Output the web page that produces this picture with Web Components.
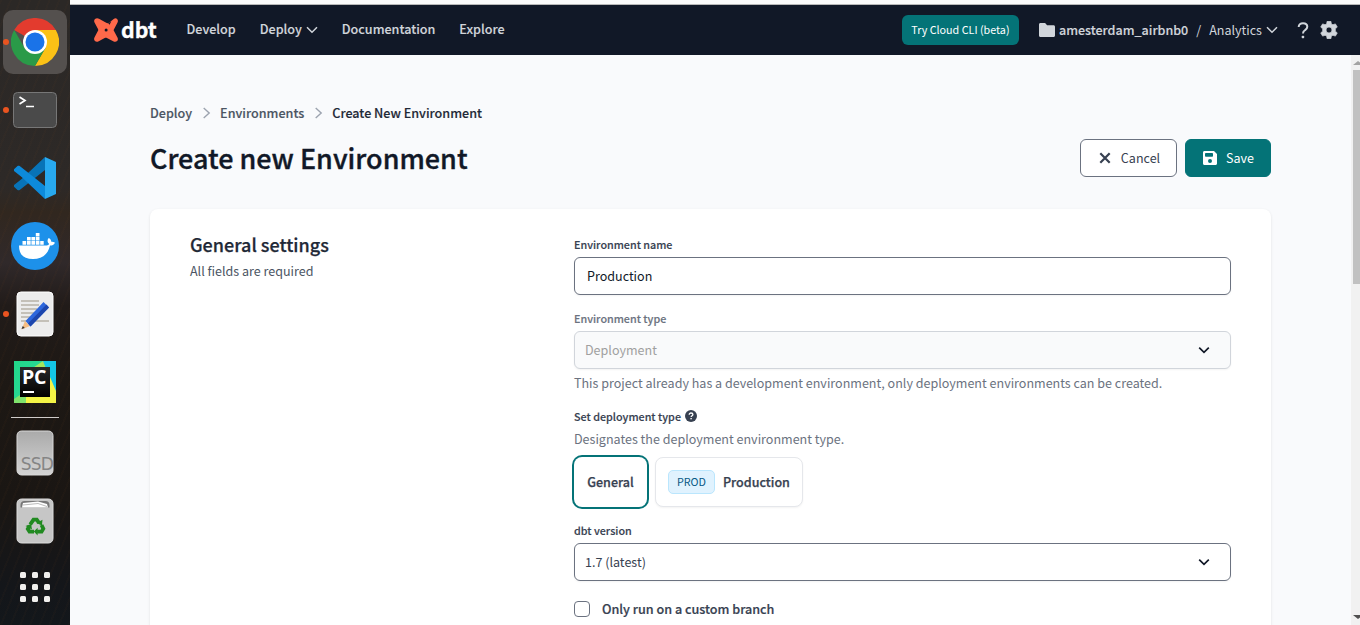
<!DOCTYPE html>
<html lang="en">
<head>
<meta charset="utf-8">
<title>Create New Environment</title>
<style>
html,body{margin:0;height:100%;overflow:hidden}
body{font-family:"Noto Sans CJK SC","Noto Sans",sans-serif;font-size:12.54px;color:#1f2937;line-height:20px}
</style>
</head>
<body>
<env-app></env-app>
<script>
const define=(name,html)=>customElements.define(name,class extends HTMLElement{
  constructor(){super();this.attachShadow({mode:'open'}).innerHTML=html;}
});

const ICONS={
  down:['0 0 12 12','<path d="M1 3.3 6 8.300 11 3.300" fill="none" stroke="currentColor" stroke-width="1.5"/>'],
  select:['0 0 12 12','<path d="M1.2 3.6 6 8.3 10.8 3.6" fill="none" stroke="currentColor" stroke-width="1.7"/>'],
  right:['0 0 12 12','<path d="M3.7 1 9.2 6 3.7 11" fill="none" stroke="currentColor" stroke-width="1.4"/>'],
  folder:['0 0 16 14','<path d="M1.5 0h4.6l2 2.2h6.4c.9 0 1.5.6 1.5 1.5v8.8c0 .9-.6 1.5-1.5 1.5h-13C.6 14 0 13.4 0 12.500V1.500C0 .6.6 0 1.500 0z" fill="currentColor"/>'],
  help:['0 0 12 17','<path d="M1.700 5C1.700 2.600 3.400 1.200 6 1.200s4.300 1.400 4.300 3.500c0 1.900-1.200 2.700-2.400 3.600C6.600 9.200 6 9.800 6 11.500" fill="none" stroke="currentColor" stroke-width="2"/><rect x="4.700" y="13.700" width="2.500" height="2.500" rx=".8" fill="currentColor"/>'],
  gear:['2 2 20 20','<path fill="currentColor" fill-rule="evenodd" d="M9.900 2.300h4.200l.5 2.900 1.800 1 2.700-1 2.100 3.600-2.200 1.900v2.600l2.200 1.900-2.100 3.600-2.700-1-1.800 1-.5 2.900H9.900l-.5-2.900-1.800-1-2.700 1-2.100-3.600L5 13.300v-2.600L2.800 8.800l2.100-3.600 2.700 1 1.800-1zM12 8.700a3.300 3.300 0 1 0 0 6.600 3.300 3.300 0 0 0 0-6.600z" stroke="currentColor" stroke-width=".8" stroke-linejoin="round"/>'],
  close:['0 0 12 12','<path d="M1.300 1.300l9.400 9.400M10.700 1.300l-9.400 9.400" stroke="currentColor" stroke-width="2.200"/>'],
  save:['0 0 14 14','<path fill="currentColor" fill-rule="evenodd" d="M1.500 0H11l3 3v9.500c0 .9-.6 1.500-1.500 1.500h-11C.6 14 0 13.400 0 12.500v-11C0 .6.600 0 1.500 0zM2.800 2c-.4 0-.8.3-.8.700v2.200c0 .5.300.8.800.8h6.400c.5 0 .8-.3.800-.8V2.700c0-.4-.3-.7-.8-.7zM7 8a2 2 0 1 0 0 4 2 2 0 0 0 0-4z"/>'],
  info:['0 0 12 12','<circle cx="6" cy="6" r="6" fill="currentColor"/><path d="M4.200 4.700C4.200 3.600 5 3 6 3s1.900.6 1.900 1.500C7.900 5.700 6.100 5.700 6.100 7.100" fill="none" stroke="#fff" stroke-width="1.300"/><rect x="5.400" y="8" width="1.400" height="1.300" fill="#fff"/>'],
  dbt:['0 0 24 24','<path d="M1 1.100C2.200-.1 3.700 0 5 .7l7.200 4.100c1 .6 2 .5 2.900-.1L19.700 1c1.200-.9 2.500-.9 3.400.1 1.100 1.200 1 2.500.2 3.900l-3.300 6.200c-.4.700-.4 1.200 0 1.900l3.200 6c.9 1.400 1 2.800-.1 3.900-1.100 1.100-2.600 1-3.900.2l-6.300-3.200c-.8-.5-1.400-.5-2.200 0L4.700 23.200c-1.300.8-2.700.9-3.800-.2-1.100-1.200-1-2.500-.2-3.900l3.300-6.300c.3-.6.300-1.100 0-1.700L.8 5C-.1 3.600-.1 2.200 1 1.100z" fill="#ff694a"/><path d="M14.200 5.200 17.300 3.300l-1.700 3.500z" fill="#111827"/><circle cx="12.100" cy="12" r="1.500" fill="#111827"/>'],
  chrome:['0 0 48 48','<path d="M24 24 3.200 12A24 24 0 0 1 44.800 12z" fill="#e33b2e"/><path d="M24 12H44.800A24 24 0 0 1 24 48L34.400 30z" fill="#fbc116"/><path d="M13.600 30 3.200 12A24 24 0 0 0 24 48l10.400-18z" fill="#2a9a48"/><circle cx="24" cy="24" r="12" fill="#fff"/><circle cx="24" cy="24" r="9.500" fill="#1a73e8"/>'],
  terminal:['0 0 44 36','<rect x=".5" y=".5" width="43" height="35" rx="4" fill="#4a4a4a" stroke="#777" stroke-width="1"/><path d="M6.500 5 12 8.500 6.500 12" fill="none" stroke="#fff" stroke-width="1.700"/><path d="M13 14.500h8" stroke="#fff" stroke-width="1.500"/>'],
  code:['0 0 42 42','<path d="M31 0 7.600 22 4.500 24.500 0 28v1.800l3.500 3.200c.8.500 1.500.4 2.200 0L31 13z" fill="#0873b7"/><path d="M31 42 7.600 20 4.500 17.500 0 14v-1.800L3.500 9c.8-.5 1.500-.4 2.200 0L31 29z" fill="#0d8ada"/><path d="M31 0 42 5v32l-11 5z" fill="#28a9ef"/>'],
  docker:['0 0 48 48','<circle cx="24" cy="24" r="24" fill="#1d91ea"/><g fill="#fff"><path d="M8 23.500h27.500c1.800 0 2.600-1 2.400-2-1.900-1.800-1.600-4-.2-5.500 2 1.100 2.500 2.400 2.600 3.800 1.300-.2 2.700.2 3.700 1-1 2-2.700 2.800-5 2.800C37 32.500 31 37 22 37 13 37 8 33 8 23.500z"/><path d="M11.500 19h3.700v3.700h-3.700zM16 19h3.700v3.700H16zM20.400 19h3.700v3.700h-3.700zM24.800 19h3.700v3.700h-3.700zM29.200 19h3.500v3.700h-3.500zM16 15h3.700v3.500H16zM20.400 15h3.700v3.500h-3.700zM24.800 15h3.700v3.500h-3.700zM24.800 11h3.700v3.500h-3.700z"/></g>'],
  editor:['0 0 38 46','<rect x="1" y="1" width="36" height="44" rx="4" fill="#ececec" stroke="#fff"/><path d="M5 10h18M5 14h18M5 18h16M5 22h13M5 26h9M5 30h28" stroke="#c4c0b8" stroke-width="2"/><path d="M5.500 38.500 9 30l5 5z" fill="#f6bd82"/><path d="m5.500 38 1.300-3 2 2z" fill="#333"/><path d="M9.500 30 27.500 11l5.500 5.500L14.500 35.500z" fill="#2e67dc"/><path d="m12 32.500 18.500-19 2.500 3L14.500 35.500z" fill="#1d46ad"/>'],
  pycharm:['0 0 42 42','<defs><linearGradient id="p" x2="1" y2=".6"><stop stop-color="#21d789"/><stop offset="1" stop-color="#2fd9a0"/></linearGradient></defs><path d="M0 0h42v42H0z" fill="url(#p)"/><path d="M28 0h14v32z" fill="#14c6e6"/><path d="M10 13 29 0l4 10-10 12z" fill="#a5e45e"/><path d="M33 9 42 30v12H0l26-14z" fill="#f3f446"/><path d="M0 38l12-8v12H0z" fill="#7fe36c"/>'],
  disk:['0 0 38 46','<defs><linearGradient id="g" x2="0" y2="1"><stop stop-color="#aaa"/><stop offset="1" stop-color="#d3d3d3"/></linearGradient></defs><rect x="1" y="1" width="36" height="44" rx="4.500" fill="url(#g)" stroke="#d8d8d8"/>'],
  trash:['0 0 38 46','<rect x="1" y="1" width="36" height="44" rx="4.500" fill="#c6c6c6" stroke="#ddd"/><path d="M4.500 9.500V7c0-2.500 1.500-4 4-4h21c2.500 0 4 1.500 4 4v2.500z" fill="#777"/><path d="M6 9.500 7 5l15-1.500 9 2.500 1 3.500z" fill="#fff"/><path d="m7 7 15-1.500 9 3" fill="none" stroke="#bbb"/><g fill="none" stroke="#218a21" stroke-width="3.800"><path d="m14.200 26.500 3.300-4.900h3.300l2.300 3.400"/><path d="m25.500 27 1.800 3.700-1.700 2.900h-4.500"/><path d="M18 33.600h-4.500l-1.700-2.700 1.700-3"/></g><path d="m26.500 21.700-.6 5.800-5.500-2.400zM21.600 29.800v7.600l-3.800-3.800zM9.500 28l5.600-2 .9 5.500z" fill="#218a21"/>']
};
class UiIcon extends HTMLElement{
  connectedCallback(){
    if(this.shadowRoot)return;
    const [box,art]=ICONS[this.getAttribute('name')];
    this.attachShadow({mode:'open'}).innerHTML=`<style>:host{display:block;flex:none;width:var(--w,12px);height:var(--h,12px)}svg{display:block;width:100%;height:100%}</style><svg viewBox="${box}">${art}</svg>`;
  }
}
customElements.define('ui-icon',UiIcon);

define('dock-item',`<style>
:host{display:grid;place-items:center;position:relative;width:64px;height:64px;flex:none;margin-bottom:4px;border-radius:10px}
:host([active]){background:#54504e}
:host([running])::before{content:"";position:absolute;left:0;top:29px;width:6px;height:6px;border-radius:50%;background:#e95420}
</style><slot></slot>`);

define('app-dock',`<style>
:host{display:flex;flex-direction:column;align-items:center;box-sizing:border-box;width:70px;flex:none;padding-top:10px;
 background:repeating-linear-gradient(112deg,rgba(120,70,30,.05) 0 2px,transparent 2px 9px),linear-gradient(#2b2826 0,#2d2927 30%,#31271f 34%,#30292a 42%,#211b19 49%,#1d1814 62%,#1a1613 80%,#14161a 94%,#13171b)}
.pc{display:grid;place-items:center}.pc>*{grid-area:1/1}
.tile{z-index:1;box-sizing:border-box;width:30px;height:30px;background:linear-gradient(#292929,#000);color:#fff;font:700 19.5px/20px "Open Sans",sans-serif;letter-spacing:-.3px;padding-left:2px}
.tile i{display:block;width:11px;height:2px;margin:4px 0 0 1px;background:#fff}
hr{width:48px;height:1px;margin:-1px 0 3px;border:0;background:#d0ccca;flex:none}
.ssd{position:relative}.ssd span{position:absolute;right:1px;bottom:2px;font:17px/20px "DejaVu Sans",sans-serif;color:#858585;letter-spacing:-.8px}
.apps{display:grid;grid-template-columns:repeat(3,6px);gap:6px;margin-top:-4px}.apps b{width:6px;height:6px;border-radius:1.5px;background:#f1f0ee}
</style>
<dock-item active running><ui-icon name="chrome" style="--w:48px;--h:48px"></ui-icon></dock-item>
<dock-item running><ui-icon name="terminal" style="--w:44px;--h:36px"></ui-icon></dock-item>
<dock-item><ui-icon name="code" style="--w:42px;--h:42px"></ui-icon></dock-item>
<dock-item><ui-icon name="docker" style="--w:48px;--h:48px"></ui-icon></dock-item>
<dock-item running><ui-icon name="editor" style="--w:38px;--h:46px"></ui-icon></dock-item>
<dock-item><div class="pc"><ui-icon name="pycharm" style="--w:42px;--h:42px"></ui-icon><div class="tile">PC<i></i></div></div></dock-item>
<hr>
<dock-item><div class="ssd"><ui-icon name="disk" style="--w:38px;--h:46px"></ui-icon><span>SSD</span></div></dock-item>
<dock-item><ui-icon name="trash" style="--w:38px;--h:46px"></ui-icon></dock-item>
<dock-item><div class="apps"><b></b><b></b><b></b><b></b><b></b><b></b><b></b><b></b><b></b></div></dock-item>`);

define('nav-bar',`<style>
:host{display:flex;align-items:center;height:51px;flex:none;box-sizing:border-box;padding:0 22px 0 24px;background:#111827;color:#d1d5db;border-top:1px solid #b8b8b8;font-weight:500;white-space:nowrap}
.logo{display:flex;align-items:center;width:92.5px;color:#fff;font:700 21.3px/24px "Noto Sans CJK SC",sans-serif;-webkit-text-stroke:.3px #fff}
.logo span{margin:-2px 0 0 3px}
.link{display:flex;align-items:center;gap:4px;margin-right:24px;margin-top:-2px;font-size:12.58px}
.link ui-icon{margin-top:1px}
.link,.proj{-webkit-text-stroke:.15px currentColor}
.cta{box-sizing:border-box;width:117px;height:30px;border-radius:6px;background:#047377;color:#fff;display:grid;place-items:center;font-weight:400;font-size:10.75px;margin:0 20px 0 auto}
.proj{margin-left:4px}
.slash{margin:0 8px;font-weight:400}.an{font-weight:400;margin-right:4px}
</style>
<div class="logo"><ui-icon name="dbt" style="--w:24px;--h:24px"></ui-icon><span>dbt</span></div>
<span class="link">Develop</span><span class="link">Deploy <ui-icon name="down"></ui-icon></span><span class="link">Documentation</span><span class="link">Explore</span>
<div class="cta">Try Cloud CLI (beta)</div>
<ui-icon name="folder" style="--w:16px;--h:14px"></ui-icon><span class="proj">amesterdam_airbnb0</span><span class="slash">/</span><span class="an">Analytics</span><ui-icon name="down"></ui-icon>
<ui-icon name="help" style="--w:12px;--h:17px;margin-left:19px"></ui-icon><ui-icon name="gear" style="--w:18px;--h:18px;margin-left:11px"></ui-icon>`);

define('bread-crumb',`<style>
:host{display:flex;align-items:center;height:20px;gap:8px;font-size:12.58px;font-weight:500;color:#4b5563}
span,b{font-weight:500;-webkit-text-stroke:.15px currentColor}b{color:#1f2937}ui-icon{color:#9ca3af}
</style><span>Deploy</span><ui-icon name="right"></ui-icon><span>Environments</span><ui-icon name="right"></ui-icon><b>Create New Environment</b>`);

define('ui-button',`<style>
:host{display:flex;align-items:center;justify-content:center;gap:10px;box-sizing:border-box;height:38px;padding-left:2px;border:1px solid #6b7280;border-radius:6px;background:#fff;color:#374151}
:host([primary]){background:#047377;border-color:#047377;color:#fff;gap:9px;padding-left:1px}
</style><slot></slot>`);

define('form-label',`<style>:host{display:flex;align-items:center;gap:4px;height:16px;margin-bottom:4px;font-size:10.75px;line-height:16px;font-weight:500;color:#374151;white-space:nowrap;-webkit-text-stroke:.15px currentColor}:host([muted]){color:#6b7280}::slotted(ui-icon){color:#374151;margin-top:-2px}</style><slot></slot>`);
define('form-hint',`<style>:host{display:block;height:20px;line-height:20px;color:#6b7280;white-space:nowrap}</style><slot></slot>`);
define('form-box',`<style>:host{display:flex;align-items:center;justify-content:space-between;box-sizing:border-box;height:38px;padding:0 20px 0 10px;border:1px solid #6b7280;border-radius:6px;background:#fff;color:#374151;box-shadow:0 1px 2px rgba(0,0,0,.05)}
:host([text]){padding-left:12px;color:#111827}:host([disabled]){border-color:#d1d5db;background:#f9fafb;color:#a0a0a0}
::slotted(ui-icon){color:#111827}</style><slot></slot>`);
define('type-option',`<style>:host{display:flex;align-items:center;gap:8px;box-sizing:border-box;height:50px;padding:0 12px;border:1px solid #e5e7eb;border-radius:8px;background:#fff;font-weight:500;color:#374151;box-shadow:0 1px 2px rgba(0,0,0,.05)}
:host([selected]){border-color:transparent;box-shadow:0 0 0 2px #047377}
::slotted(span){-webkit-text-stroke:.25px currentColor}</style><slot></slot>`);
define('type-badge',`<style>:host{display:grid;place-items:center;flex:none;box-sizing:border-box;width:47px;height:24px;border:1px solid #bae6fd;border-radius:5px;background:#e0f2fe;color:#075985;font-size:10.75px;font-weight:400}</style><slot></slot>`);
define('check-row',`<style>:host{display:flex;align-items:center;gap:12px;height:16px;font-size:12.6px;font-weight:500;color:#374151;-webkit-text-stroke:.2px currentColor}i{box-sizing:border-box;width:16px;height:16px;border:1px solid #6b7280;border-radius:4px;background:#fff}</style><i></i><slot></slot>`);

define('settings-card',`<style>
:host{display:grid;grid-template-columns:384px 1fr;box-sizing:border-box;height:700px;padding:28px 40px;border-radius:8px;background:#fff;box-shadow:0 1px 3px rgba(0,0,0,.1)}
h2{margin:-5px 0 5px;font-size:18px;line-height:24px;font-weight:500;color:#1f2937;-webkit-text-stroke:.25px currentColor}p{margin:0;color:#4b5563}
form-box{margin-bottom:16px}.types{display:flex;gap:8px;margin:8px 0 16px}.types type-option[selected]{width:73px;justify-content:center;padding:0}.types .prod{width:148px}
</style>
<section><h2>General settings</h2><p>All fields are required</p></section>
<section>
<form-label>Environment name</form-label><form-box text><span>Production</span></form-box>
<form-label muted>Environment type</form-label><form-box disabled style="margin-bottom:4px"><span>Deployment</span><ui-icon name="select"></ui-icon></form-box>
<form-hint style="margin-bottom:16px">This project already has a development environment, only deployment environments can be created.</form-hint>
<form-label>Set deployment type <ui-icon name="info"></ui-icon></form-label>
<form-hint>Designates the deployment environment type.</form-hint>
<div class="types"><type-option selected><span>General</span></type-option><type-option class="prod"><type-badge>PROD</type-badge><span>Production</span></type-option></div>
<form-label>dbt version</form-label><form-box style="margin-bottom:20px"><span>1.7 (latest)</span><ui-icon name="select"></ui-icon></form-box>
<check-row>Only run on a custom branch</check-row>
</section>`);

define('scroll-rail',`<style>:host{display:flex;flex-direction:column;width:9px;flex:none;background:#f1f1f1;overflow:hidden}
.u,.d{width:0;height:0;border:5px solid transparent;margin-left:2px;flex:none}.u{border-bottom-color:#a3a3a3;border-top:0;margin-top:6px;border-bottom-width:4px}.d{border-top-color:#505050;border-bottom:0;margin:auto 0 6px 2px;border-top-width:4px}
.t{height:214px;background:#c1c1c1;margin:5px 0 0 2px;flex:none}</style><div class="u"></div><div class="t"></div><div class="d"></div>`);

define('env-app',`<style>
:host{display:flex;height:625px;width:1360px;overflow:hidden;background:#f9fafc}
.win{flex:1;display:flex;flex-direction:column;min-width:0}
.chrome{height:4px;flex:none;background:#fafafa}
.body{display:flex;flex:1;min-height:0}
main{flex:1;padding:48px 80px 0;min-width:0;overflow:hidden}
header{display:flex;align-items:center;gap:8px;height:38px;margin:16px 0 32px}
h1{flex:1;margin:0;font-size:26.95px;line-height:36px;font-weight:500;color:#111827;-webkit-text-stroke:.35px currentColor}
</style>
<app-dock></app-dock>
<div class="win"><div class="chrome"></div><nav-bar></nav-bar>
<div class="body"><main><bread-crumb></bread-crumb>
<header><h1>Create new Environment</h1><ui-button style="width:97px"><ui-icon name="close"></ui-icon><span>Cancel</span></ui-button><ui-button primary style="width:86px"><ui-icon name="save" style="--w:14px;--h:14px"></ui-icon><span>Save</span></ui-button></header>
<settings-card></settings-card></main><scroll-rail></scroll-rail></div></div>`);
</script>
</body>
</html>
